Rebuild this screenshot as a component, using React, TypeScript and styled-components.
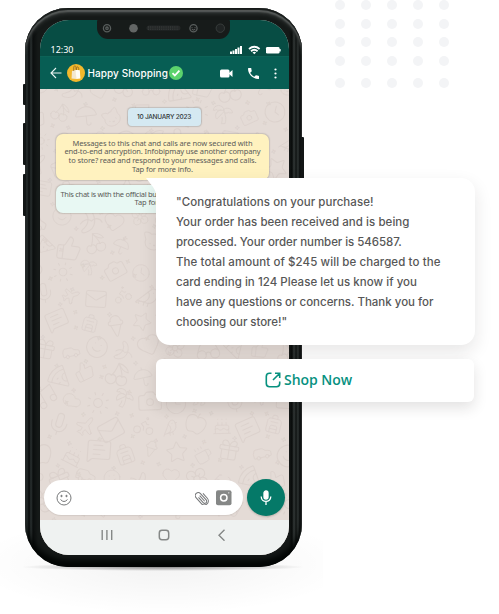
import type { LucideIcon } from "lucide-react";
import {
  Apple, Backpack, Banana, Bike, Cake, Camera, Car, Cat, Cherry, Clock, Cloud, Coffee, Flower,
  Gift, Glasses, Heart, IceCreamCone, Mail, MessageSquareText, Mic, Music, Pizza, Plane, Rocket,
  Smile, Star, Sun, ThumbsUp, TreePalm, Umbrella, Sparkle, Bird,
} from "lucide-react";
import styled, { createGlobalStyle } from "styled-components";

const GlobalStyle = createGlobalStyle`
  * { box-sizing: border-box; }
  body { margin: 0; background: #fff; }
`;

const Stage = styled.main`
  position: relative;
  width: 499px;
  height: 614px;
  overflow: hidden;
  padding: 8px 0 0 25px;
  background: #fff;
  font-family: Inter, sans-serif;
`;

const DotField = styled.svg`
  position: absolute;
  top: 0;
  left: 330px;
`;

const FloorGlow = styled.div`
  position: absolute;
  left: 0;
  top: 490px;
  width: 323px;
  height: 124px;
  background:
    radial-gradient(ellipse 142px 4px at 163px 77px, rgba(0, 0, 0, 0.42), rgba(0, 0, 0, 0.15) 65%, transparent),
    radial-gradient(ellipse 190px 50px at 163px 74px, rgba(0, 0, 0, 0.05), transparent);
`;

const Phone = styled.section`
  position: relative;
  width: 277px;
  height: 559px;
  padding: 12px 13.5px 12px 14.5px;
  border-radius: 43px;
  background: linear-gradient(90deg, #111717 0, #303838 2px, #080b0b 4px, #2b3131 6px, #0b0e0e 8px, #151918 13px,
    #151918 264px, #080b0a 267px, #333938 269px, #101413 271px, #313736 273px, #0a0d0d 275px, #141919 277px);
  box-shadow: inset 0 2px 1px #161a19, inset 0 4px 2px #606463, inset 0 7px 3px #252928,
    inset 0 -7px 5px #030605;
`;

const SideKey = styled.i<{ $side: "left" | "right"; $top: number; $height: number }>`
  position: absolute;
  ${(p) => p.$side}: -2px;
  top: ${(p) => p.$top}px;
  width: 3px;
  height: ${(p) => p.$height}px;
  border-radius: 1px;
  background: #121616;
`;

const Screen = styled.div`
  position: relative;
  display: flex;
  flex-direction: column;
  height: 535px;
  overflow: hidden;
  border-radius: 29px;
  background: #e4dbd6;
`;

const Notch = styled.div`
  position: absolute;
  top: -1px;
  left: 57.5px;
  width: 133px;
  height: 20px;
  border-radius: 3px 3px 11px 11px;
  background: #171b1a;
`;

const StatusBar = styled.header`
  display: flex;
  flex: 0 0 36px;
  align-items: flex-end;
  justify-content: space-between;
  padding: 0 7px 0 11px;
  background: #074d44;
  color: #fff;
  font: 9px/12px "Noto Sans", sans-serif;
`;

const StatusIcons = styled.svg`
  margin-bottom: 1px;
`;

const ChatHeader = styled.div`
  display: flex;
  flex: 0 0 33px;
  align-items: center;
  padding: 0 12px 0 10px;
  background: #075e54;
  border-top: 1px solid #0c6357;
  color: #fff;
`;

const Avatar = styled.svg`
  margin-left: 5px;
`;

const ContactName = styled.span`
  flex: none;
  width: 80px;
  margin-left: 3px;
  font: 500 10px/14px Inter, sans-serif;
  letter-spacing: 0.08px;
  white-space: nowrap;
`;

const Verified = styled.svg`
  margin-left: 1px;
`;

const CallActions = styled.div`
  display: flex;
  align-items: center;
  gap: 15px;
  margin-left: auto;
`;

const Conversation = styled.div`
  position: relative;
  display: flex;
  flex: 1;
  flex-direction: column;
  padding: 18.5px 17px 4px 16.5px;
`;

const Wallpaper = styled.svg`
  position: absolute;
  inset: 0;
  color: #dcd2cd;
`;

const DateChip = styled.time`
  position: relative;
  width: 73px;
  margin-left: 71.5px;
  height: 18px;
  border-radius: 4px;
  background: #d5e9f2;
  box-shadow: 0 0 1px 0.5px rgba(120, 125, 125, 0.3);
  color: #303538;
  font: 500 6.5px/18px Inter, sans-serif;
  letter-spacing: -0.24px;
  text-align: center;
  white-space: nowrap;
`;

const Notice = styled.div<{ $tone: "yellow" | "mint" }>`
  position: relative;
  width: 213px;
  margin-top: ${(p) => (p.$tone === "yellow" ? 8 : 5)}px;
  height: ${(p) => (p.$tone === "yellow" ? 46 : 28)}px;
  padding-top: 5px;
  overflow: hidden;
  border-radius: 7px;
  background: ${(p) => (p.$tone === "yellow" ? "#fff2bf" : "#e8f8f3")};
  box-shadow: 0 0 1px 0.5px rgba(120, 115, 105, 0.25);
  color: #5a5a57;
  font: 7.5px/8.7px "Noto Sans", sans-serif;
  letter-spacing: -0.11px;
  text-align: center;
`;

const NoticeLine = styled.div<{ $indent?: number; $tight?: boolean }>`
  white-space: nowrap;
  letter-spacing: ${(p) => (p.$tight ? "-0.3px" : "inherit")};
  padding-left: ${(p) => p.$indent ?? 0}px;
  text-align: ${(p) => (p.$indent ? "left" : "center")};
`;

const Composer = styled.div`
  position: relative;
  display: flex;
  align-items: center;
  gap: 4px;
  margin: auto -15px 0 -12px;
`;

const InputPill = styled.div`
  display: flex;
  align-items: center;
  width: 199px;
  height: 35px;
  padding: 0 11px 0 12px;
  border-radius: 18px;
  background: #fff;
  box-shadow: 0 1px 1px rgba(100, 90, 80, 0.12);
`;

const Attachment = styled.svg`
  margin-left: auto;
`;

const CameraIcon = styled.svg`
  margin-left: 7px;
`;

const MicButton = styled.div`
  display: grid;
  flex: none;
  place-items: center;
  width: 38px;
  height: 37px;
  border-radius: 50%;
  background: #057968;
  box-shadow: 0 1px 2px rgba(60, 50, 40, 0.25);
`;

const SystemNav = styled.nav`
  display: flex;
  flex: 0 0 35px;
  align-items: flex-start;
  gap: 45px;
  padding: 9px 0 0 61.5px;
  background: #eff2f1;
`;

const Message = styled.article`
  position: absolute;
  left: 156px;
  top: 178px;
  width: 319px;
  height: 167px;
  padding: 14px 20px;
  border-radius: 0 14px 14px 14px;
  background: #fff;
  box-shadow: 0 7px 18px rgba(40, 30, 30, 0.11);
  color: #575757;
  font: 500 11.5px/20px Inter, sans-serif;
`;

const MessageTail = styled.svg`
  position: absolute;
  top: 0;
  left: -10px;
`;

const MessageLine = styled.div<{ $track: number }>`
  letter-spacing: ${(p) => p.$track}px;
  white-space: nowrap;
`;

const ShopButton = styled.button`
  position: absolute;
  left: 156px;
  top: 359px;
  display: flex;
  align-items: center;
  justify-content: center;
  gap: 3px;
  width: 318px;
  height: 43px;
  padding: 0 13px 2px 0;
  border: 0;
  border-radius: 6px;
  background: #fff;
  box-shadow: 0 6px 14px rgba(40, 30, 30, 0.13);
  color: #07917f;
  font: 600 14px/20px "Open Sans", sans-serif;
  letter-spacing: -0.05px;
`;

const doodleIcons: LucideIcon[] = [
  Smile, Cat, Plane, Star, Pizza, Camera, Cake, Banana, Music, Mail, Coffee, ThumbsUp, Clock,
  MessageSquareText, Heart, Cloud, Bike, Gift, Cherry, Rocket, Backpack, Flower, Sun, Bird, Car,
  Umbrella, Mic, IceCreamCone, Glasses, TreePalm, Apple,
];

const doodles = Array.from({ length: 170 }, (_, i) => ({
  Icon: doodleIcons[(i * 7 + Math.floor(i / 10) * 3) % doodleIcons.length],
  x: (i % 10) * 27 + (Math.floor(i / 10) % 2) * -10 + ((i * 13) % 7),
  y: Math.floor(i / 10) * 26 + ((i * 11) % 8) - 4,
  size: 19 + ((i * 5) % 9),
  turn: ((i * 37) % 60) - 30,
}));

const messageLines: [string, number][] = [
  ['"Congratulations on your purchase!', 0.053],
  ["Your order has been received and is being", 0.05],
  ["processed. Your order number is 546587.", -0.05],
  ["The total amount of $245 will be charged to the", 0.087],
  ["card ending in 124 Please let us know if you", 0.036],
  ["have any questions or concerns. Thank you for", -0.012],
  ['choosing our store!"', -0.055],
];

export default function App() {
  return (
    <>
      <GlobalStyle />
      <Stage>
        <DotField width="130" height="95" fill="#f3f4f6">
          {[5, 24, 42, 61, 83].flatMap((cy) =>
            [10, 36, 62, 88, 114].map((cx) => <circle key={`${cx}-${cy}`} cx={cx} cy={cy} r="5" />),
          )}
        </DotField>
        <FloorGlow />
        <Phone>
          <SideKey $side="left" $top={76} $height={21} />
          <SideKey $side="left" $top={115} $height={42} />
          <SideKey $side="left" $top={166} $height={42} />
          <SideKey $side="right" $top={129} $height={63} />
          <Screen>
            <StatusBar>
              <span>12:30</span>
              <StatusIcons width="52" height="10" fill="#fff">
                <path d="M0 6.500h2v2.500H0zM2.500 5.500h2V9h-2zM5 4h2v5H5zM7.500 2.500h2V9h-2zM10 1h2v8h-2z" />
                <g fill="none" stroke="#fff" strokeWidth="1.900">
                  <path d="M19 4q5.300-4.400 10.600 0" />
                  <path d="M21 6.200q3.300-2.700 6.600 0" />
                </g>
                <path d="m22.500 7.500 1.800 1.800 1.800-1.800q-1.800-1.300-3.600 0Z" />
                <rect x="36" y="2" width="13.500" height="6.500" rx="1.300" />
                <rect x="49" y="4" width="1.700" height="2.500" rx=".5" />
              </StatusIcons>
            </StatusBar>
            <Notch>
              <svg width="133" height="20">
                <g fill="none" stroke="#585d5c" strokeWidth="1.3">
                  <circle cx="10" cy="9.2" r="3.6" />
                  <circle cx="10" cy="9.2" r="1.2" />
                  <circle cx="96.5" cy="9.2" r="3.6" />
                </g>
                <path d="M95 8.2v1M98 8.2v1M94.8 10.4q1.7 1.2 3.4 0" stroke="#777" strokeWidth=".8" fill="none" />
                <circle cx="36.5" cy="9.2" r="4.3" fill="#636665" />
                <circle cx="123.3" cy="9.2" r="4.2" fill="#202424" stroke="#383d3c" />
                <rect x="49.5" y="6.5" width="34" height="5" rx="2.5" fill="#252828" />
                <path d="M51 8h31M51 10.2h31" stroke="#424645" strokeDasharray="1 1.2" strokeWidth=".8" />
              </svg>
            </Notch>
            <ChatHeader>
              <svg width="12" height="12" fill="none" stroke="#e7f4f1" strokeWidth="1.1">
                <path d="M6 1 1 6l5 5M1 6h10.500" />
              </svg>
              <Avatar width="18" height="18">
                <circle cx="9" cy="9" r="9" fill="#f2b82c" />
                <path d="M5 7 8.800 5.800 9.500 15 4.500 14.500Z" fill="#f3e8cf" />
                <path d="m8.500 5.800 4.300.5.600 8.200-4.100.5Z" fill="#fffdf4" />
                <path d="M6.700 7V4C6.900 1 9 1 9 4v2M9.500 6V4.200c.4-2 2-1.700 2.200.5V6" fill="none" stroke="#75501f" strokeWidth=".6" />
              </Avatar>
              <ContactName>Happy Shopping</ContactName>
              <Verified width="14" height="14">
                <circle cx="7" cy="7" r="7" fill="#5bd36d" />
                <path d="m3.500 7.200 2.300 2.300 4.600-4.900" fill="none" stroke="#fff" strokeWidth="1.800" />
              </Verified>
              <CallActions>
                <svg width="13" height="9" fill="#fff">
                  <rect y=".5" width="9.500" height="8" rx="1.500" />
                  <path d="m9 4 3.500-3v7L9 5Z" />
                </svg>
                <svg width="11" height="11" viewBox="3 3 18 18" fill="#fff">
                  <path d="M6.600 10.800c1.400 2.800 3.800 5.100 6.600 6.600l2.200-2.200c.3-.3.7-.4 1-.2 1.100.4 2.300.6 3.600.6.6 0 1 .4 1 1V20c0 .6-.4 1-1 1C10.600 21 3 13.400 3 4c0-.6.5-1 1-1h3.500c.6 0 1 .4 1 1 0 1.300.2 2.500.6 3.600.1.3 0 .7-.3 1Z" />
                </svg>
                <svg width="3" height="11" fill="#fff">
                  <circle cx="1.500" cy="1.500" r="1.100" />
                  <circle cx="1.500" cy="5.500" r="1.100" />
                  <circle cx="1.500" cy="9.500" r="1.100" />
                </svg>
              </CallActions>
            </ChatHeader>
            <Conversation>
              <Wallpaper width="250" height="431">
                {doodles.map(({ Icon, x, y, size, turn }, i) => (
                  <g key={i} transform={`translate(${x} ${y}) rotate(${turn})`}>
                    <Icon x={-size / 2} y={-size / 2} size={size} strokeWidth={1} />
                    <Sparkle x={size / 2} y={size / 2} size={5} strokeWidth={3} />
                  </g>
                ))}
              </Wallpaper>
              <DateChip>10 JANUARY 2023</DateChip>
              <Notice $tone="yellow">
                <NoticeLine>Messages to this chat and calls are now secured with</NoticeLine>
                <NoticeLine>end-to-end ancryption. Infobipmay use another company</NoticeLine>
                <NoticeLine>to store? read and respond to your messages and calls.</NoticeLine>
                <NoticeLine>Tap for more info.</NoticeLine>
              </Notice>
              <Notice $tone="mint">
                <NoticeLine $tight $indent={4.5}>This chat is with the official bus</NoticeLine>
                <NoticeLine $indent={78.5}>Tap for</NoticeLine>
              </Notice>
              <Composer>
                <InputPill>
                  <svg width="16" height="16" fill="none" stroke="#77797a" strokeWidth="1">
                    <circle cx="8" cy="8" r="7" />
                    <path d="M4.500 9.500q3.500 4 7 0" />
                    <circle cx="5.500" cy="6" r=".7" fill="#77797a" />
                    <circle cx="10.500" cy="6" r=".7" fill="#77797a" />
                  </svg>
                  <Attachment width="14" height="14" fill="none" stroke="#747678" strokeWidth="1">
                    <g transform="translate(7 7.300) rotate(-42)">
                      <path d="M-2-3V4a2 2 0 0 0 4 0V-4.500a3 3 0 0 0-6 0V3.500a4 4 0 0 0 8 0V-3M0-3.500V4" />
                    </g>
                  </Attachment>
                  <CameraIcon width="16" height="16">
                    <rect width="15.500" height="15" y=".3" rx="2" fill="#858786" />
                    <circle cx="7.800" cy="7.800" r="3.200" fill="none" stroke="#fff" strokeWidth="1.500" />
                    <circle cx="12.800" cy="2.800" r=".6" fill="#fff" />
                  </CameraIcon>
                </InputPill>
                <MicButton>
                  <svg width="12" height="15" fill="none" stroke="#fff" strokeWidth="1.300">
                    <rect x="4" y="1" width="4" height="8" rx="2" fill="#fff" />
                    <path d="M1.200 6.500C1.200 13 10.800 13 10.800 6.500M6 11.300V15" />
                  </svg>
                </MicButton>
              </Composer>
            </Conversation>
            <SystemNav>
              <svg width="12" height="12" stroke="#858887" strokeWidth="1.400">
                <path d="M1.200 1v10M5.900 1v10M10.700 1v10" />
              </svg>
              <svg width="12" height="12" fill="none" stroke="#858887" strokeWidth="1.500">
                <rect x="1.300" y="1.300" width="9.400" height="9.400" rx="2.700" />
              </svg>
              <svg width="12" height="12" fill="none" stroke="#858887" strokeWidth="1.400">
                <path d="M9.500.8 4 6.300 9.500 11.700" />
              </svg>
            </SystemNav>
          </Screen>
        </Phone>
        <Message>
          <MessageTail width="11" height="15" fill="#fff">
            <path d="M0 0h11v15h-1q-1-3-3-6Z" />
          </MessageTail>
          {messageLines.map(([text, track]) => (
            <MessageLine key={text} $track={track}>{text}</MessageLine>
          ))}
        </Message>
        <ShopButton>
          <svg width="16" height="16" fill="none" stroke="currentColor" strokeWidth="1.600">
            <path d="M6.500 1.300H4.500Q1.300 1.300 1.300 4.500v7Q1.300 14.700 4.500 14.700h7q3.200 0 3.200-3.200v-2M10 1.300h4.700V6M14.300 1.700 8 8" />
          </svg>
          Shop Now
        </ShopButton>
      </Stage>
    </>
  );
}
